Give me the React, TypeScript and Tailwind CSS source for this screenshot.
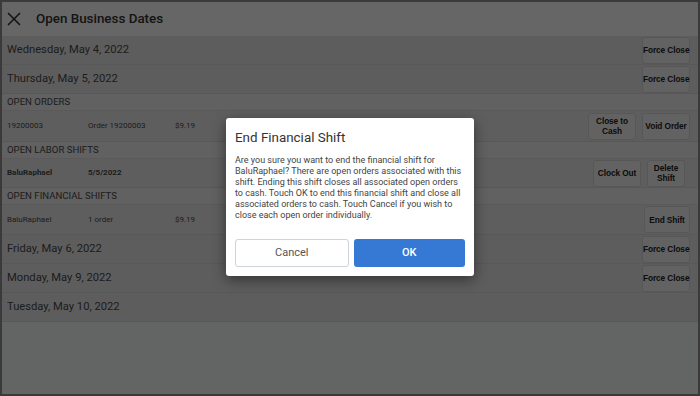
import React from 'react';
import { X } from 'lucide-react';

const font = { fontFamily: 'Roboto, "Noto Sans", sans-serif' };

const ActionButton: React.FC<{ label: React.ReactNode; className?: string }> = ({ label, className = '' }) => (
  <button
    className={`h-[27px] whitespace-nowrap rounded-[3px] border border-[#d9d9d9] bg-[#f6f6f6] px-0 text-[8.3px] leading-[10px] font-bold tracking-[-0.1px] text-[#222] ${className}`}
    style={{ fontFamily: '"Liberation Sans", Arial, sans-serif' }}
  >
    {label}
  </button>
);

const DateRow: React.FC<{ date: string; force?: boolean }> = ({ date, force = true }) => (
  <div className="flex h-[29px] items-center justify-between border-b border-[#dcdcdc] bg-[#e9e9e9] pl-[5px] pr-[8px]">
    <span className="text-[11.2px] text-[#4a4a4a]">{date}</span>
    {force && <ActionButton label="Force Close" className="w-[48px]" />}
  </div>
);

const SectionHeader: React.FC<{ title: string }> = ({ title }) => (
  <div className="flex h-[17px] items-center border-b border-[#e2e2e2] bg-[#f2f2f2] pl-[5px] text-[9.6px] text-[#4a4a4a]">
    {title}
  </div>
);

const DetailRow: React.FC<{ cells: string[]; bold?: boolean; children: React.ReactNode; height?: string }> = ({
  cells,
  bold = false,
  children,
  height = 'h-[31px]',
}) => (
  <div className={`flex ${height} items-center justify-between border-b border-[#dcdcdc] bg-[#ececec] pl-[5px] pr-[8px]`}>
    <div className={`flex text-[8px] text-[#4a4a4a] ${bold ? 'font-bold' : ''}`}>
      <span className="w-[81px]">{cells[0]}</span>
      <span className="w-[87px]">{cells[1]}</span>
      {cells[2] && <span>{cells[2]}</span>}
    </div>
    <div className="flex gap-[6px]">{children}</div>
  </div>
);

export default function App() {
  return (
    <div className="relative h-[396px] w-[700px] overflow-hidden border-2 border-[#3a3a3a] bg-[#f8f9fb]" style={font}>
      {/* Page */}
      <div className="flex h-[34px] items-center bg-white pl-[1px]">
        <X size={22} strokeWidth={1.8} className="text-[#333]" />
        <span className="ml-[11px] text-[13.4px] font-medium text-[#333]">Open Business Dates</span>
      </div>

      <DateRow date="Wednesday, May 4, 2022" />
      <DateRow date="Thursday, May 5, 2022" />

      <SectionHeader title="OPEN ORDERS" />
      <DetailRow cells={['19200003', 'Order 19200003', '$9.19']}>
        <ActionButton label={<>Close to<br />Cash</>} className="w-[48px]" />
        <ActionButton label="Void Order" className="w-[48px]" />
      </DetailRow>

      <SectionHeader title="OPEN LABOR SHIFTS" />
      <DetailRow cells={['BaluRaphael', '5/5/2022']} bold height="h-[29px]">
        <ActionButton label="Clock Out" className="w-[48px]" />
        <ActionButton label={<>Delete<br />Shift</>} className="mr-[5px] w-[38px]" />
      </DetailRow>

      <SectionHeader title="OPEN FINANCIAL SHIFTS" />
      <DetailRow cells={['BaluRaphael', '1 order', '$9.19']} height="h-[30px]">
        <ActionButton label="End Shift" className="w-[46px]" />
      </DetailRow>

      <DateRow date="Friday, May 6, 2022" />
      <DateRow date="Monday, May 9, 2022" />
      <DateRow date="Tuesday, May 10, 2022" force={false} />

      {/* Overlay */}
      <div className="absolute inset-0 bg-black/60" />

      {/* Dialog */}
      <div className="absolute left-[224px] top-[116px] w-[248px] rounded-[3px] bg-white px-[9px] pt-[10px] pb-[9px] shadow-[0_4px_14px_rgba(0,0,0,0.45)]">
        <h2 className="text-[13.4px] leading-[20px] text-[#333]">End Financial Shift</h2>
        <p className="mt-[7px] text-[9px] leading-[11px] text-[#444]">
          Are you sure you want to end the financial shift for BaluRaphael? There are open orders associated with this
          shift. Ending this shift closes all associated open orders to cash. Touch OK to end this financial shift and
          close all associated orders to cash. Touch Cancel if you wish to close each open order individually.
        </p>
        <div className="mt-[18px] flex gap-[5px]">
          <button className="h-[28px] flex-1 rounded-[3px] border border-[#cfd3da] bg-white text-[11px] text-[#555]">
            Cancel
          </button>
          <button className="h-[28px] flex-1 rounded-[3px] bg-[#3579d4] text-[11px] font-medium text-white">OK</button>
        </div>
      </div>
    </div>
  );
}
